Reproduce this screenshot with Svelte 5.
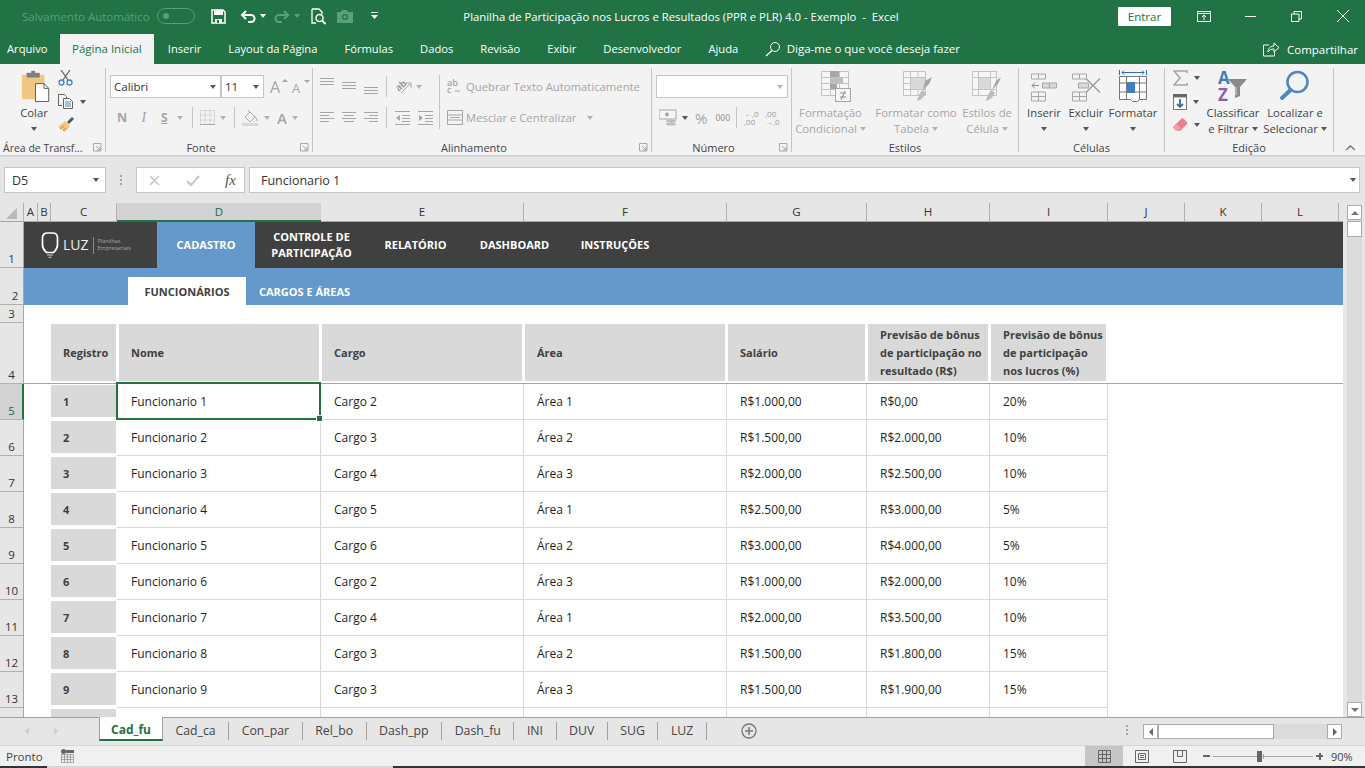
<script>
	const tabs = ['Arquivo', 'Página Inicial', 'Inserir', 'Layout da Página', 'Fórmulas', 'Dados', 'Revisão', 'Exibir', 'Desenvolvedor', 'Ajuda'];
	const letters = ['A', 'B', 'C', 'D', 'E', 'F', 'G', 'H', 'I', 'J', 'K', 'L'];
	const heads = ['Registro', 'Nome', 'Cargo', 'Área', 'Salário'];
	const sheets = ['Cad_fu', 'Cad_ca', 'Con_par', 'Rel_bo', 'Dash_pp', 'Dash_fu', 'INI', 'DUV', 'SUG', 'LUZ'];

	const rows = [
		[1, 'Cargo 2', 'Área 1', 'R$1.000,00', 'R$0,00', '20%'],
		[2, 'Cargo 3', 'Área 2', 'R$1.500,00', 'R$2.000,00', '10%'],
		[3, 'Cargo 4', 'Área 3', 'R$2.000,00', 'R$2.500,00', '10%'],
		[4, 'Cargo 5', 'Área 1', 'R$2.500,00', 'R$3.000,00', '5%'],
		[5, 'Cargo 6', 'Área 2', 'R$3.000,00', 'R$4.000,00', '5%'],
		[6, 'Cargo 2', 'Área 3', 'R$1.000,00', 'R$2.000,00', '10%'],
		[7, 'Cargo 4', 'Área 1', 'R$2.000,00', 'R$3.500,00', '10%'],
		[8, 'Cargo 3', 'Área 2', 'R$1.500,00', 'R$1.800,00', '15%'],
		[9, 'Cargo 3', 'Área 3', 'R$1.500,00', 'R$1.900,00', '15%']
	];

	const rowNums = [1, 2, 3, 4, 5, 6, 7, 8, 9, 10, 11, 12, 13, 14];

	// align icons: [x1, x2, y]
	const alignTop = [[0, 14, 3], [0, 14, 6], [0, 14, 9]];
	const alignMid = [[0, 14, 7], [0, 14, 10], [0, 14, 13]];
	const alignBot = [[0, 14, 12], [0, 14, 15], [0, 14, 18]];
	const alignL = [[0, 14, 6], [0, 9, 9], [0, 14, 12], [0, 9, 15]];
	const alignC = [[0, 14, 6], [2, 12, 9], [0, 14, 12], [2, 12, 15]];
	const alignR = [[0, 14, 6], [5, 14, 9], [0, 14, 12], [5, 14, 15]];
</script>

{#snippet lines(r)}
	<svg class="ic" width="14" height="23">
		{#each r as [a, b, y]}
			<rect x={a} {y} width={b - a} height="1" fill="#a6a6a6" />
		{/each}
	</svg>
{/snippet}

{#snippet launcher()}
	<svg class="launch" width="9" height="9">
		<path d="M0.5 8V0.5H8V8z M3 3l4 4 M4 7h3V4" fill="none" stroke="#a9a9a9" />
	</svg>
{/snippet}

<div class="app">
	<!-- title bar -->
	<header class="titlebar">
		<div class="qat">
			<span class="autosave">Salvamento Automático</span>
			<span class="toggle"><i></i></span>
			<svg class="save" width="15" height="15" viewBox="0 0 15 15">
				<path d="M1 1h11l2 2v11H1z" fill="none" stroke="#fff" stroke-width="1.5" />
				<rect x="3" y="1" width="9" height="5" fill="#fff" />
				<rect x="4" y="10" width="7" height="4" fill="#fff" />
				<rect x="6" y="11" width="2" height="3" fill="#217346" />
			</svg>
			<svg class="undo" width="16" height="15" viewBox="0 0 16 15">
				<path d="M6 2L2 6l4 4M2 6h9a3.500 3.500 0 0 1 0 7H8" fill="none" stroke="#fff" stroke-width="2" />
			</svg>
			<span class="caret white"></span>
			<svg class="redo" width="16" height="15" viewBox="0 0 16 15">
				<path d="M10 2l4 4-4 4M14 6H5a3.500 3.500 0 0 0 0 7h3" fill="none" stroke="#5aa07a" stroke-width="2" />
			</svg>
			<span class="caret faded"></span>
			<svg class="preview" width="16" height="17" viewBox="0 0 16 17">
				<path d="M1 1h7l3 3v2M5 15H1V1" fill="none" stroke="#fff" stroke-width="1.300" />
				<circle cx="8.500" cy="10" r="3.500" fill="none" stroke="#fff" stroke-width="1.500" />
				<path d="M11 12.500l3.500 3.500" stroke="#fff" stroke-width="2" />
			</svg>
			<svg class="camera" width="16" height="13" viewBox="0 0 16 13">
				<path d="M0 2h4l1-2h5l1 2h5v11H0z" fill="#5aa07a" />
				<circle cx="8" cy="7" r="3" fill="#217346" />
				<circle cx="8" cy="7" r="1.800" fill="#5aa07a" />
			</svg>
			<svg class="customize" width="7" height="8" viewBox="0 0 7 8">
				<rect x="0" y="0" width="7" height="1" fill="#fff" />
				<path d="M0 3h7L3.500 7z" fill="#fff" />
			</svg>
		</div>
		<div class="doc-title">Planilha de Participação nos Lucros e Resultados (PPR e PLR) 4.0 - Exemplo  -  Excel</div>
		<div class="win">
			<button class="signin">Entrar</button>
			<svg class="w1" width="14" height="11" viewBox="0 0 14 11">
				<path d="M.5.5h13v10H.5zM.5 2.500h13M7 9V4M5 6l2-2 2 2" fill="none" stroke="#fff" />
			</svg>
			<svg class="w2" width="11" height="1"><rect width="11" height="1" fill="#fff" /></svg>
			<svg class="w3" width="11" height="11" viewBox="0 0 11 11">
				<path d="M.5 3h7.500v7.500H.5zM3 3V.5h7.500V8H8" fill="none" stroke="#fff" />
			</svg>
			<svg class="w4" width="12" height="12" viewBox="0 0 12 12">
				<path d="M0 0l12 12M12 0L0 12" stroke="#fff" />
			</svg>
		</div>
	</header>

	<!-- menu tabs -->
	<nav class="menu">
		{#each tabs as t, i}
			<span class="menu-tab" class:active={i === 1}>{t}</span>
		{/each}
		<svg class="search" width="16" height="16" viewBox="0 0 16 16">
			<circle cx="10" cy="6" r="4.500" fill="none" stroke="#fff" />
			<path d="M7 9.500L1 15" stroke="#fff" stroke-width="1.200" />
		</svg>
		<span class="tell">Diga-me o que você deseja fazer</span>
		<span class="share">
			<svg width="17" height="15" viewBox="0 0 17 15">
				<path d="M6 3H.5v11h11v-4M5 10c0-4 3-6 6-6V1l5 4.500L11 10V7c-3 0-5 1-6 3z" fill="none" stroke="#fff" />
			</svg>
			Compartilhar
		</span>
	</nav>

	<!-- ribbon -->
	<section class="ribbon">
		<div class="group g-clip">
			<div class="body clip">
				<div class="big paste">
					<svg width="30" height="32" viewBox="0 -2 30 34">
						<rect x="0" y="3" width="24" height="26" rx="1" fill="#efc77f" />
						<rect x="5" y="1" width="14" height="5" fill="#7f7f7f" />
						<rect x="10" y="-1" width="4" height="3" fill="#7f7f7f" />
						<path d="M14.500 12.500h9l5 5v14h-14z" fill="#fff" stroke="#555" />
						<path d="M23.500 12.500v5h5" fill="none" stroke="#555" />
					</svg>
					<span class="lbl dark">Colar</span>
					<span class="caret"></span>
				</div>
				<div class="smalls">
					<svg width="15" height="16" viewBox="0 0 15 16">
						<path d="M3 0l7 10M12 0L5 10" stroke="#666" stroke-width="1.300" />
						<circle cx="3.500" cy="12.500" r="2.500" fill="none" stroke="#4a80bd" stroke-width="1.300" />
						<circle cx="11.500" cy="12.500" r="2.500" fill="none" stroke="#4a80bd" stroke-width="1.300" />
					</svg>
					<div class="hrow">
						<svg width="15" height="15" viewBox="0 0 15 15">
							<path d="M.5.5h6l2 2v2M4 11.500H.5V.5" fill="none" stroke="#666" />
							<path d="M5.500 4.500h6l3 3v7h-9z" fill="#fff" stroke="#666" />
							<path d="M7 8h6M7 10h6M7 12h6" stroke="#4a80bd" />
						</svg>
						<span class="caret"></span>
					</div>
					<svg width="16" height="15" viewBox="0 0 16 15">
						<path d="M0 10l7-6 5 5-5 6z" fill="#efc77f" />
						<path d="M2 12l4-3M5 14l3-3" stroke="#b98f3f" />
						<path d="M9 5l5-5 2 2-5 5z" fill="#555" />
					</svg>
				</div>
			</div>
			<div class="glabel">Área de Transf...</div>
			{@render launcher()}
		</div>

		<div class="group g-font">
			<div class="body rows">
				<div class="row">
					<span class="field f-name">Calibri<span class="caret"></span></span>
					<span class="field f-size">11<span class="caret"></span></span>
					<span class="ga up">A</span>
					<span class="ga down">A</span>
				</div>
				<div class="row r2">
					<span class="fmt b">N</span>
					<span class="fmt i">I</span>
					<span class="fmt s">S</span>
					<span class="caret off wide-c"></span>
					<span class="vsep"></span>
					<svg width="15" height="15" viewBox="0 0 15 15">
						<path d="M.5.5h14v14H.5zM.5 5h14M.5 10h14M5 .5v14M10 .5v14" fill="none" stroke="#bdbdbd" stroke-dasharray="1 1" />
						<path d="M0 14.500h15" stroke="#a6a6a6" />
					</svg>
					<span class="caret off"></span>
					<span class="vsep"></span>
					<svg width="17" height="17" viewBox="0 0 17 17">
						<path d="M3 8l5-5 5 5-5 5z" fill="#f6f6f6" stroke="#a6a6a6" />
						<path d="M6 1l2 2M13 8c2 1 2 3 2 4" stroke="#a6a6a6" fill="none" />
						<rect x="0" y="14" width="16" height="3" fill="#d9d9d9" />
					</svg>
					<span class="caret off"></span>
					<span class="fa">A</span>
					<span class="caret off"></span>
				</div>
			</div>
			<div class="glabel launched">Fonte</div>
			{@render launcher()}
		</div>

		<div class="group g-align">
			<div class="align-grid">
				<div class="body rows a-left">
					<div class="row">
						{@render lines(alignTop)}
						{@render lines(alignMid)}
						{@render lines(alignBot)}
						<span class="vsep tall"></span>
						<svg class="loose" width="17" height="15" viewBox="0 0 17 15">
							<text x="1" y="10" transform="rotate(-40 6 8)" class="orient">ab</text>
							<path d="M6 14L15 5M11 4h5v5" fill="none" stroke="#a6a6a6" />
						</svg>
						<span class="caret off"></span>
					</div>
					<div class="row">
						{@render lines(alignL)}
						{@render lines(alignC)}
						{@render lines(alignR)}
						<span class="vsep tall"></span>
						<svg width="15" height="15" viewBox="0 0 15 15">
							<path d="M0 1.500h15M7 5.500h8M7 8.500h8M7 11.500h8M0 14.500h15" stroke="#a6a6a6" />
							<path d="M5 5L1 8l4 3z" fill="#a6a6a6" />
						</svg>
						<svg width="15" height="15" viewBox="0 0 15 15">
							<path d="M0 1.500h15M7 5.500h8M7 8.500h8M7 11.500h8M0 14.500h15" stroke="#a6a6a6" />
							<path d="M1 5l4 3-4 3z" fill="#a6a6a6" />
						</svg>
					</div>
				</div>
				<div class="a-right">
					<div class="wide">
						<svg class="loose" width="16" height="15" viewBox="0 0 16 15">
							<text x="0" y="7" class="wrap-t">ab</text>
							<text x="0" y="14" class="wrap-t">c</text>
							<path d="M8 12h5" stroke="#a6a6a6" />
						</svg>
						<span class="muted">Quebrar Texto Automaticamente</span>
					</div>
					<div class="wide">
						<svg width="16" height="15" viewBox="0 0 16 15">
							<path d="M.5.5h15v14H.5zM.5 5h15M.5 10h15" fill="none" stroke="#a6a6a6" />
							<path d="M3 7.500h10" stroke="#a6a6a6" />
						</svg>
						<span class="muted">Mesclar e Centralizar</span>
						<span class="caret off merge"></span>
					</div>
				</div>
			</div>
			<div class="glabel launched">Alinhamento</div>
			{@render launcher()}
		</div>

		<div class="group g-num">
			<div class="body rows">
				<div class="row"><span class="field f-num"><span class="caret off"></span></span></div>
				<div class="row r-num">
					<svg width="18" height="17" viewBox="0 0 18 17">
						<rect x="0" y="1" width="17" height="9" fill="#f6f6f6" stroke="#a6a6a6" />
						<circle cx="8" cy="5.500" r="2" fill="#a6a6a6" />
						<ellipse cx="12" cy="12" rx="5" ry="1.500" fill="#bdbdbd" />
						<ellipse cx="12" cy="15" rx="5" ry="1.500" fill="#bdbdbd" />
					</svg>
					<span class="caret"></span>
					<span class="pct">%</span>
					<span class="thou">000</span>
					<span class="vsep"></span>
					<span class="dec">←,0<br />,00</span>
					<span class="dec">,00<br />→,0</span>
				</div>
			</div>
			<div class="glabel launched">Número</div>
			{@render launcher()}
		</div>

		<div class="group g-style">
			<div class="body bigs">
				<div class="big s1">
					<svg width="30" height="32" viewBox="0 -1 30 32">
						<path d="M.5.5h27v24H.5zM.5 6.500h27M.5 12.500h27M.5 18.500h27M9.500.5v24M18.500.5v24" fill="#f6f6f6" stroke="#c4c4c4" />
						<rect x="9" y="0" width="9" height="6" fill="#a6a6a6" />
						<rect x="9" y="7" width="13" height="5" fill="#bdbdbd" />
						<rect x="9" y="13" width="7" height="5" fill="#a6a6a6" />
						<rect x="14.500" y="17.500" width="15" height="13" fill="#f6f6f6" stroke="#a6a6a6" />
						<path d="M19 22h6M19 26h6M24 20l-4 9" stroke="#8c8c8c" />
					</svg>
					<span class="lbl">Formatação</span>
					<span class="lbl">Condicional<span class="caret off inl"></span></span>
				</div>
				<div class="big s2">
					<svg width="30" height="32" viewBox="0 -1 30 32">
						<path d="M.5.5h22v24H.5zM.5 6.500h22M.5 12.500h22M.5 18.500h22M7.500.5v24M15 .5v24" fill="#f6f6f6" stroke="#c4c4c4" />
						<rect x="8" y="7" width="14" height="11" fill="#d9d9d9" />
						<path d="M22 10l7-4-3 7-6 6z" fill="#a6a6a6" />
						<path d="M14 30c1-5 3-9 6-11l3 3c-2 4-5 7-9 8z" fill="#bdbdbd" />
					</svg>
					<span class="lbl">Formatar como</span>
					<span class="lbl">Tabela<span class="caret off inl"></span></span>
				</div>
				<div class="big s3">
					<svg width="30" height="32" viewBox="0 -1 30 32">
						<path d="M.5.5h24v24H.5zM.5 6.500h24M.5 18.500h24M6.500.5v24M18.500.5v24" fill="#f6f6f6" stroke="#c4c4c4" />
						<rect x="7" y="7" width="11" height="11" fill="#d9d9d9" />
						<path d="M24 10l5-4-3 7-6 6z" fill="#a6a6a6" />
						<path d="M14 30c1-5 3-9 6-11l3 3c-2 4-5 7-9 8z" fill="#bdbdbd" />
					</svg>
					<span class="lbl">Estilos de</span>
					<span class="lbl">Célula<span class="caret off inl"></span></span>
				</div>
			</div>
			<div class="glabel">Estilos</div>
		</div>

		<div class="group g-cells">
			<div class="body bigs">
				<div class="big c1">
					<svg width="28" height="31" viewBox="0 0 28 31">
						<path d="M1.500 3.500h14v5h-14zM8.500 3.500v5M1.500 21.500h14v9h-14zM8.500 21.500v9M1.500 26h14" fill="none" stroke="#a6a6a6" />
						<path d="M12.500 12.500h14v5h-14zM19.500 12.500v5" fill="#d9d9d9" stroke="#a6a6a6" />
						<path d="M9 15H2M5 12l-3 3 3 3" fill="none" stroke="#8a8a8a" />
					</svg>
					<span class="lbl dark">Inserir</span>
					<span class="caret"></span>
				</div>
				<div class="big c2">
					<svg width="30" height="31" viewBox="0 0 30 31">
						<path d="M1.500 3.500h14v5h-14zM8.500 3.500v5M1.500 21.500h14v9h-14zM8.500 21.500v9M1.500 26h14" fill="none" stroke="#a6a6a6" />
						<path d="M7.500 12.500h10v5h-10z" fill="#d9d9d9" stroke="#a6a6a6" />
						<path d="M15 8l14 14M29 8L15 22" stroke="#9a9a9a" stroke-width="1.300" />
					</svg>
					<span class="lbl dark">Excluir</span>
					<span class="caret"></span>
				</div>
				<div class="big c3">
					<svg width="28" height="32" viewBox="0 0 28 32">
						<path d="M.5 0v5M27.500 0v5M3 2.500h22M5 .5l-2 2 2 2M23 .5l2 2-2 2" fill="none" stroke="#2f6fb0" />
						<path d="M.5 6.500h27v23h-7l-2 2h-5l-2-2h-11zM.5 13h27M.5 22h27M7.500 6.500v23M20.500 6.500v23" fill="#fff" stroke="#777" />
						<rect x="8" y="12" width="8" height="11" fill="#3f7fbf" />
					</svg>
					<span class="lbl dark">Formatar</span>
					<span class="caret"></span>
				</div>
			</div>
			<div class="glabel">Células</div>
		</div>

		<div class="group g-edit">
			<div class="body bigs">
				<div class="smalls ed">
					<div class="hrow">
						<svg width="15" height="16" viewBox="0 0 15 16">
							<path d="M14 3V1H1l6 7-6 7h13v-2" fill="none" stroke="#a6a6a6" stroke-width="1.600" />
						</svg>
						<span class="caret"></span>
					</div>
					<div class="hrow">
						<svg width="14" height="16" viewBox="0 0 14 16">
							<rect x="0" y="0" width="14" height="3" fill="#666" />
							<rect x=".5" y="3" width="13" height="12.500" fill="#fff" stroke="#777" />
							<path d="M7 5v8M4 10l3 3 3-3" fill="none" stroke="#2f6fb0" stroke-width="1.800" />
						</svg>
						<span class="caret"></span>
					</div>
					<div class="hrow">
						<svg width="15" height="14" viewBox="0 0 15 14">
							<path d="M0 9l8-8a2 2 0 0 1 3 0l3 3a2 2 0 0 1 0 2l-7 7H3z" fill="#ec7f8c" />
							<path d="M3 13L0 9l3-3 5 4-3 3z" fill="#f2a0aa" />
						</svg>
						<span class="caret"></span>
					</div>
				</div>
				<div class="big e1">
					<svg class="loose" width="30" height="32" viewBox="0 0 30 32">
						<text x="0" y="14" class="az a">A</text>
						<text x="0" y="31" class="az z">Z</text>
						<path d="M10 9h19l-7 8v9l-5 2V17z" fill="#8a8a8a" />
						<path d="M18 17v8" stroke="#d9d9d9" />
					</svg>
					<span class="lbl dark">Classificar</span>
					<span class="lbl dark">e Filtrar<span class="caret inl"></span></span>
				</div>
				<div class="big e2">
					<svg width="30" height="32" viewBox="0 0 30 32">
						<circle cx="17.500" cy="12" r="10" fill="none" stroke="#4f88c1" stroke-width="2.600" />
						<path d="M10.500 20L2 28" stroke="#4f88c1" stroke-width="4" stroke-linecap="round" />
					</svg>
					<span class="lbl dark">Localizar e</span>
					<span class="lbl dark">Selecionar<span class="caret inl"></span></span>
				</div>
			</div>
			<div class="glabel">Edição</div>
		</div>

		<svg class="collapse" width="9" height="6" viewBox="0 0 9 6">
			<path d="M0 5l4.500-4L9 5" fill="none" stroke="#777" stroke-width="1.500" />
		</svg>
	</section>

	<!-- formula bar -->
	<div class="formula">
		<div class="namebox">D5<span class="caret"></span></div>
		<div class="dots"><i></i><i></i><i></i></div>
		<div class="fxbox">
			<svg width="11" height="11" viewBox="0 0 11 11">
				<path d="M1 1l9 9M10 1L1 10" stroke="#c6c6c6" stroke-width="1.500" />
			</svg>
			<svg width="14" height="11" viewBox="0 0 14 11">
				<path d="M1 6l4 4 8-9" fill="none" stroke="#c6c6c6" stroke-width="2" />
			</svg>
			<span class="fx">fx</span>
		</div>
		<div class="input">Funcionario 1<span class="caret"></span></div>
	</div>

	<!-- sheet -->
	<div class="workspace">
		<div class="sheet">
			<div class="colheads">
				<div class="corner"><svg width="11" height="11"><path d="M11 0v11H0z" fill="#b9b9b9" /></svg></div>
				{#each letters as l}
					<div class="ch" class:sel={l === 'D'}>{l}</div>
				{/each}
				<div class="ch-end"></div>
			</div>
			<div class="sheet-main">
				<div class="rowheads">
					{#each rowNums as n}
						<div class="rh r{n}" class:sel={n === 5}>{n}</div>
					{/each}
				</div>
				<div class="cells">
					<div class="topnav">
						<div class="logo">
							<svg width="18" height="26" viewBox="0 0 18 26">
								<path d="M5.500 20.500C3.500 18.500 1.500 17 1.500 13V6c0-3 2-5 5-5h5c3 0 5 2 5 5v7c0 4-2 5.500-4 7.500z" fill="none" stroke="#fff" stroke-width="1.700" />
								<path d="M6 23h6M7.500 25.300h3" stroke="#d0d0d0" />
							</svg>
							<span class="luz">LUZ</span>
							<span class="logo-sep"></span>
							<span class="logo-sub">Planilhas<br />Empresariais</span>
						</div>
						<div class="nav active n1">CADASTRO</div>
						<div class="nav n2">CONTROLE DE<br />PARTICIPAÇÃO</div>
						<div class="nav n3">RELATÓRIO</div>
						<div class="nav n4">DASHBOARD</div>
						<div class="nav n5">INSTRUÇÕES</div>
					</div>
					<div class="subnav">
						<div class="sub active">FUNCIONÁRIOS</div>
						<div class="sub other">CARGOS E ÁREAS</div>
					</div>
					<div class="spacer"></div>
					<div class="thead tbl">
						{#each heads as h}
							<div class="th">{h}</div>
						{/each}
						<div class="th">Previsão de bônus de participação no resultado (R$)</div>
						<div class="th last">Previsão de bônus de participação nos lucros (%)</div>
					</div>
					{#each rows as r, i}
						<div class="tr tbl">
							<div class="id"><span>{r[0]}</span></div>
							<div class="td" class:current={i === 0}>Funcionario {r[0]}</div>
							{#each r.slice(1) as v}
								<div class="td">{v}</div>
							{/each}
						</div>
					{/each}
					<div class="tr tbl">
						<div class="id"></div>
						{#each [0, 1, 2, 3, 4, 5] as k}
							<div class="td" data-k={k}></div>
						{/each}
					</div>
				</div>
			</div>
		</div>
		<div class="vscroll">
			<div class="track">
				<div class="sb-btn"><span class="tri-up"></span></div>
				<div class="sb-thumb"></div>
				<div class="sb-fill"></div>
				<div class="sb-btn"><span class="tri-down"></span></div>
			</div>
		</div>
	</div>

	<!-- sheet tabs -->
	<div class="tabbar">
		<div class="nav-arrows">
			<span class="tri-left"></span>
			<span class="tri-right"></span>
		</div>
		<div class="sheet-tabs">
			{#each sheets as s, i}
				<span class="st" class:active={i === 0}>{s}</span>
			{/each}
		</div>
		<svg class="add" width="16" height="16" viewBox="0 0 16 16">
			<circle cx="8" cy="8" r="7" fill="none" stroke="#777" stroke-width="1.300" />
			<path d="M8 4v8M4 8h8" stroke="#777" stroke-width="1.500" />
		</svg>
		<div class="dots hs"><i></i><i></i><i></i></div>
		<div class="hscroll">
			<div class="sb-btn h"><span class="tri-left dark"></span></div>
			<div class="h-thumb"></div>
			<div class="h-fill"></div>
			<div class="sb-btn h"><span class="tri-right dark"></span></div>
		</div>
	</div>

	<!-- status bar -->
	<footer class="status">
		<span class="ready">Pronto</span>
		<svg class="macro" width="13" height="14" viewBox="0 0 13 14">
			<circle cx="2.500" cy="2.500" r="2.500" fill="#666" />
			<rect x="5" y="1" width="8" height="3" fill="#666" />
			<path d="M.5 5.500h12v8H.5zM.5 8h12M.5 10.500h12M3.500 5.500v8M6.500 5.500v8M9.500 5.500v8" fill="none" stroke="#666" stroke-dasharray="1 1" />
		</svg>
		<div class="views">
			<span class="view on">
				<svg width="13" height="13" viewBox="0 0 13 13">
					<path d="M.5.5h12v12H.5zM.5 4.500h12M.5 8.500h12M4.500.5v12M8.500.5v12" fill="none" stroke="#666" />
				</svg>
			</span>
			<span class="view">
				<svg width="14" height="13" viewBox="0 0 14 13">
					<path d="M.5.5h13v12H.5z" fill="none" stroke="#666" />
					<path d="M3.500 3.500h7v6h-7zM5 5.500h4M5 7.500h4" fill="none" stroke="#666" />
				</svg>
			</span>
			<span class="view">
				<svg width="14" height="13" viewBox="0 0 14 13">
					<path d="M.5.5h13v12H.5zM4.500.5v6h5v-6" fill="none" stroke="#666" />
				</svg>
			</span>
		</div>
		<span class="minus"></span>
		<div class="slider"><i class="tick"></i><i class="knob"></i></div>
		<span class="plus"></span>
		<span class="zoom">90%</span>
	</footer>
	<div class="taskbar"><i></i><b></b><i class="rest"></i></div>
</div>

<style>
	:global(body) {
		margin: 0;
		overflow: hidden;
	}

	.app {
		width: 1365px;
		height: 768px;
		display: flex;
		flex-direction: column;
		overflow: hidden;
		font-family: 'Open Sans', 'Liberation Sans', sans-serif;
		background: #e6e6e6;
		color: #444;
	}

	svg {
		display: block;
		flex-shrink: 0;
	}
	svg.loose {
		overflow: visible;
	}

	.caret {
		display: inline-block;
		width: 0;
		height: 0;
		border-left: 3.5px solid transparent;
		border-right: 3.5px solid transparent;
		border-top: 4px solid #555;
		flex-shrink: 0;
	}
	.caret.off {
		border-top-color: #b3b3b3;
	}
	.caret.white {
		border-top-color: #fff;
		margin: 0 8px 0 4px;
	}
	.caret.faded {
		border-top-color: #5aa07a;
	}
	.caret.inl {
		margin-left: 3px;
		vertical-align: 2px;
	}

	/* ── title bar ── */
	.titlebar {
		height: 32px;
		background: #217346;
		display: flex;
		align-items: center;
		color: #fff;
		flex-shrink: 0;
	}
	.qat {
		width: 455px;
		display: flex;
		align-items: center;
		padding-left: 22px;
		box-sizing: border-box;
	}
	.autosave {
		color: #56a079;
		font-size: 11.5px;
		width: 135px;
		white-space: nowrap;
	}
	.toggle {
		width: 38px;
		height: 16px;
		box-sizing: border-box;
		border: 1px solid #56a079;
		border-radius: 8px;
		display: flex;
		align-items: center;
		padding-left: 5px;
	}
	.toggle i {
		width: 6px;
		height: 6px;
		border-radius: 50%;
		background: #56a079;
	}
	.save {
		margin-left: 16px;
	}
	.undo {
		margin-left: 14px;
	}
	.redo {
		margin-right: 4px;
	}
	.preview {
		margin-left: 11px;
	}
	.camera {
		margin-left: 10px;
	}
	.customize {
		margin-left: 18px;
	}
	.doc-title {
		width: 452px;
		text-align: center;
		font-size: 11.35px;
		white-space: pre;
	}
	.win {
		flex: 1;
		display: flex;
		align-items: center;
	}
	.signin {
		margin-left: 211px;
		width: 53px;
		height: 19px;
		border: none;
		padding: 0;
		background: #fff;
		color: #217346;
		font: 11.5px 'Open Sans', sans-serif;
		border-radius: 1px;
	}
	.w1 {
		margin-left: 26px;
	}
	.w2 {
		margin-left: 34px;
	}
	.w3 {
		margin-left: 35px;
	}
	.w4 {
		margin-left: 35px;
	}

	/* ── menu tabs ── */
	.menu {
		height: 32px;
		background: #217346;
		display: flex;
		align-items: flex-end;
		color: #fff;
		font-size: 11.2px;
		flex-shrink: 0;
	}
	.menu-tab {
		height: 30px;
		line-height: 29px;
		padding: 0 13.5px;
		white-space: nowrap;
	}
	.menu-tab:first-child {
		padding: 0 12px 0 7px;
	}
	.menu-tab.active {
		background: #f3f3f3;
		color: #217346;
		padding: 0 12.5px;
		font-size: 11.5px;
	}
	.search {
		margin: 0 6px 7px 13px;
	}
	.tell {
		height: 30px;
		line-height: 29px;
		white-space: nowrap;
		font-size: 11.5px;
	}
	.share {
		margin-left: auto;
		margin-right: 7px;
		height: 30px;
		display: flex;
		align-items: center;
		gap: 7px;
		font-size: 11.5px;
	}

	/* ── ribbon ── */
	.ribbon {
		height: 91px;
		margin-bottom: 2px;
		background: #f3f3f3;
		display: flex;
		box-sizing: border-box;
		padding: 4px 0 3px;
		position: relative;
		flex-shrink: 0;
		box-shadow: 0 1px 0 #d0d0d0, 0 2px 0 #dcdcdc;
	}
	.group {
		position: relative;
		box-sizing: border-box;
		border-right: 1px solid #c6c6c6;
		display: flex;
		flex-direction: column;
		justify-content: space-between;
	}
	.g-clip {
		width: 106px;
	}
	.g-font {
		width: 207px;
	}
	.g-align {
		width: 339px;
	}
	.g-num {
		width: 140px;
	}
	.g-style {
		width: 227px;
	}
	.g-cells {
		width: 146px;
	}
	.g-edit {
		width: 169px;
	}
	.glabel {
		height: 16px;
		line-height: 16px;
		margin-bottom: -4px;
		font-size: 11px;
		text-align: center;
		color: #444;
		white-space: nowrap;
	}
	.glabel.launched {
		padding-right: 16px;
	}
	.g-clip .glabel {
		text-align: left;
		padding-left: 3px;
		font-size: 10.5px;
	}
	.launch {
		position: absolute;
		right: 3px;
		bottom: 0;
	}
	.collapse {
		position: absolute;
		right: 10px;
		bottom: 4px;
	}
	.lbl {
		font-size: 11.3px;
		line-height: 16px;
		color: #a6a6a6;
		white-space: nowrap;
	}
	.lbl.dark {
		color: #444;
	}
	.big {
		display: flex;
		flex-direction: column;
		align-items: center;
		flex-shrink: 0;
	}
	.big svg {
		height: 32px;
		margin-bottom: 3px;
	}
	.big > .caret {
		margin-top: 6px;
	}
	.body.clip,
	.body.bigs {
		display: flex;
		padding-top: 2px;
	}
	.paste {
		width: 52px;
		margin-left: 8px;
	}
	.paste svg {
		margin-left: 4px;
	}
	.smalls {
		display: flex;
		flex-direction: column;
		gap: 8px;
		margin-left: -2px;
		padding-top: 0;
	}
	.hrow {
		display: flex;
		align-items: center;
		gap: 7px;
	}
	.rows {
		padding: 7px 0 0 4px;
		display: flex;
		flex-direction: column;
		gap: 8px;
	}
	.row {
		height: 23px;
		display: flex;
		align-items: center;
	}
	.field {
		box-sizing: border-box;
		height: 23px;
		background: #fff;
		border: 1px solid #c6c6c6;
		font-size: 11.5px;
		line-height: 20px;
		color: #333;
		display: flex;
		align-items: center;
		justify-content: space-between;
		padding: 0 4px 0 3px;
	}
	.f-name {
		width: 111px;
	}
	.f-size {
		width: 43px;
	}
	.ga {
		font-size: 16px;
		color: #a6a6a6;
		position: relative;
		margin-left: 6px;
		width: 16px;
		text-align: left;
	}
	.ga.down {
		font-size: 13px;
		margin-left: 6px;
		padding-top: 2px;
	}
	.ga::after {
		content: '';
		position: absolute;
		right: -2px;
		top: 3px;
		border-left: 3px solid transparent;
		border-right: 3px solid transparent;
	}
	.ga.up::after {
		border-bottom: 3px solid #a6a6a6;
	}
	.ga.down::after {
		border-top: 3px solid #a6a6a6;
	}
	.r2 {
		padding-left: 7px;
		gap: 0;
	}
	.r2 .caret {
		margin: 0 8px 0 5px;
	}
	.r2 .caret.wide-c {
		margin: 0 9px 0 7px;
	}
	.fmt {
		width: 21.5px;
		font-size: 12.5px;
		color: #a6a6a6;
		font-weight: 700;
		white-space: nowrap;
	}
	.fmt.i {
		width: 22.5px;
		box-sizing: border-box;
		padding-left: 3px;
		font-style: italic;
		font-family: 'Liberation Serif', serif;
		font-weight: 400;
		font-size: 14px;
	}
	.fmt.s {
		text-decoration: underline;
		width: 9px;
		font-size: 12px;
	}
	.fa {
		font-size: 15px;
		color: #a6a6a6;
		font-weight: 600;
		margin-left: -1px;
	}
	.vsep {
		width: 1px;
		height: 21px;
		background: #c6c6c6;
		margin-right: 7px;
		flex-shrink: 0;
	}
	.vsep.tall {
		margin: 0 7px 0 8px;
	}
	.r2 .vsep {
		margin-left: 0;
	}

	.align-grid {
		display: flex;
	}
	.a-left {
		padding-left: 7px;
		width: 126px;
		box-sizing: border-box;
	}
	.a-left .row {
		gap: 8px;
	}
	.a-left .vsep.tall {
		margin: 0;
	}
	.a-left .caret {
		margin-left: -4px;
	}
	.a-right {
		border-left: 1px solid #c6c6c6;
		margin-top: 7px;
		height: 54px;
		padding-left: 7px;
		display: flex;
		flex-direction: column;
		gap: 8px;
	}
	.wide {
		height: 23px;
		display: flex;
		align-items: center;
		gap: 3px;
	}
	.muted {
		font-size: 11.3px;
		color: #a6a6a6;
		white-space: nowrap;
	}
	.merge {
		margin-left: 8px;
	}
	.orient {
		font: 600 9.5px 'Open Sans', sans-serif;
		fill: #8c8c8c;
	}
	.wrap-t {
		font: 600 9px 'Open Sans', sans-serif;
		fill: #a6a6a6;
	}
	.f-num {
		width: 132px;
		justify-content: flex-end;
	}
	.r-num {
		padding-left: 3px;
	}
	.r-num .caret {
		margin: 0 9px 0 5px;
	}
	.pct {
		font-size: 15px;
		color: #a6a6a6;
		margin-right: 6px;
		margin-left: -2px;
	}
	.thou {
		font-size: 8.5px;
		color: #8c8c8c;
		margin-right: 6px;
		margin-left: 2px;
	}
	.r-num .vsep {
		margin-right: 7px;
	}
	.dec {
		font-size: 8px;
		line-height: 8px;
		color: #999;
		width: 21px;
		white-space: nowrap;
	}

	.s1 {
		width: 75px;
		margin-left: 1px;
	}
	.s1 svg {
		margin-left: 10px;
	}
	.s2 {
		width: 96px;
	}
	.s2 svg {
		margin-left: 4px;
	}
	.s3 {
		width: 46px;
	}
	.g-cells .bigs {
		padding-left: 1px;
	}
	.c1 {
		width: 48px;
	}
	.c2 {
		width: 36px;
	}
	.c3 {
		width: 58px;
	}
	.ed {
		width: 36px;
		padding-left: 8px;
		box-sizing: border-box;
		margin-left: 0;
		flex-shrink: 0;
	}
	.ed .hrow {
		gap: 6px;
	}
	.e1 {
		width: 64px;
	}
	.e2 {
		width: 60px;
	}
	.az {
		font: 700 17px 'Open Sans', sans-serif;
	}
	.az.a {
		fill: #3f7fbf;
	}
	.az.z {
		fill: #8e5bb5;
	}

	/* ── formula bar ── */
	.formula {
		height: 46px;
		display: flex;
		padding: 10px 5px 10px 4px;
		box-sizing: border-box;
		flex-shrink: 0;
	}
	.namebox,
	.fxbox,
	.input {
		box-sizing: border-box;
		height: 26px;
		background: #fff;
		border: 1px solid #c6c6c6;
		display: flex;
		align-items: center;
		font-size: 12.5px;
		color: #333;
	}
	.namebox {
		width: 102px;
		justify-content: space-between;
		padding: 0 6px 0 7px;
	}
	.dots {
		width: 30px;
		display: flex;
		flex-direction: column;
		align-items: center;
		justify-content: center;
		gap: 2px;
	}
	.dots i {
		width: 2px;
		height: 2px;
		background: #a6a6a6;
	}
	.fxbox {
		width: 109px;
		padding-left: 12px;
		gap: 26px;
	}
	.fx {
		font: italic 400 15px 'Liberation Serif', serif;
		color: #555;
		margin-left: -1px;
	}
	.input {
		margin-left: 4px;
		flex: 1;
		padding: 0 3px 0 11px;
		justify-content: space-between;
	}

	/* ── sheet ── */
	.workspace {
		height: 514px;
		display: flex;
		flex-shrink: 0;
	}
	.sheet {
		width: 1343px;
		display: flex;
		flex-direction: column;
	}
	.colheads {
		height: 19px;
		display: grid;
		grid-template-columns: 24px 14px 13px 66px 204px 203px 203px 140px 123px 118px 77px 77px 77px 4px;
		border-bottom: 1px solid #a6a6a6;
		box-sizing: border-box;
		flex-shrink: 0;
	}
	.corner {
		display: flex;
		align-items: flex-end;
		justify-content: center;
		padding-bottom: 3px;
		border-right: 1px solid #b0b0b0;
		box-sizing: border-box;
	}
	.ch {
		border-right: 1px solid #b0b0b0;
		font-size: 11.5px;
		text-align: center;
		line-height: 18px;
		color: #333;
	}
	.ch.sel {
		background: #d2d2d2;
		border-bottom: 2px solid #217346;
		border-right: 0;
		color: #1d6b40;
		height: 19px;
		box-sizing: border-box;
	}
	.sheet-main {
		display: flex;
		height: 495px;
		overflow: hidden;
	}
	.rowheads {
		width: 24px;
		flex-shrink: 0;
		border-right: 1px solid #a6a6a6;
		box-sizing: border-box;
	}
	.rh {
		height: 36px;
		box-sizing: border-box;
		border-bottom: 1px solid #b0b0b0;
		display: flex;
		align-items: flex-end;
		justify-content: center;
		font-size: 11.5px;
		line-height: 15px;
		padding-bottom: 1px;
		color: #333;
	}
	.rh.r1 {
		height: 46px;
	}
	.rh.r2 {
		height: 37px;
	}
	.rh.r3 {
		height: 18px;
	}
	.rh.r4 {
		height: 61px;
	}
	.rh.sel {
		background: #d2d2d2;
		color: #1d6b40;
		box-shadow: inset -1px 0 0 #217346;
		margin-right: -1px;
		border-right: 1px solid #217346;
	}
	.cells {
		flex: 1;
		min-width: 0;
		background: #fff;
		overflow: hidden;
		font-size: 12px;
		color: #1f1f1f;
	}
	.topnav {
		height: 46px;
		background: #404040;
		display: flex;
		color: #fff;
		font-weight: 700;
		font-size: 11px;
		line-height: 16px;
		text-align: center;
	}
	.logo {
		width: 133px;
		display: flex;
		align-items: center;
		padding-left: 17px;
		box-sizing: border-box;
		font-weight: 400;
		text-align: left;
	}
	.luz {
		font-size: 14px;
		margin-left: 4px;
		color: #eee;
	}
	.logo-sep {
		width: 1px;
		height: 17px;
		background: #888;
		margin: 0 4px 0 4px;
	}
	.logo-sub {
		font-size: 5.5px;
		line-height: 7px;
		color: #a6a6a6;
		white-space: nowrap;
	}
	.nav {
		display: flex;
		align-items: center;
		justify-content: center;
	}
	.nav.active {
		background: #6598cb;
	}
	.n1 {
		width: 98px;
	}
	.n2 {
		width: 113px;
	}
	.n3 {
		width: 95px;
	}
	.n4 {
		width: 103px;
	}
	.n5 {
		width: 98px;
	}
	.subnav {
		height: 37px;
		background: #6598cb;
		display: flex;
		align-items: flex-end;
		padding-left: 104px;
		font-size: 11px;
		font-weight: 700;
	}
	.sub {
		height: 28px;
		line-height: 29px;
		text-align: center;
	}
	.sub.active {
		width: 118px;
		background: #fff;
		color: #404040;
	}
	.sub.other {
		margin-left: 13px;
		color: #fff;
	}
	.spacer {
		height: 18px;
	}
	.tbl {
		display: grid;
		grid-template-columns: 27px 66px 204px 203px 203px 140px 123px 118px;
	}
	.thead {
		height: 61px;
		box-sizing: border-box;
		padding: 1px 0 2px 0;
		border-bottom: 1px solid #a6a6a6;
		font-weight: 700;
		font-size: 11px;
		color: #404040;
		line-height: 18px;
	}
	.th {
		background: #d9d9d9;
		display: flex;
		align-items: center;
		padding-left: 12px;
		margin-left: 1px;
		margin-right: 2px;
	}
	.th:nth-child(1) {
		grid-column: 2;
		margin: 0 1px 0 0;
	}
	.th:nth-child(2) {
		margin-left: 2px;
	}
	.tr {
		height: 36px;
	}
	.id {
		grid-column: 2;
		padding: 1px 1px 3px 0;
		font-weight: 700;
		font-size: 11px;
		color: #404040;
	}
	.id span {
		display: flex;
		align-items: center;
		height: 100%;
		background: #d9d9d9;
		padding-left: 12px;
	}
	.tr:last-child .id {
		padding-bottom: 0;
	}
	.tr:last-child .id::before {
		content: '';
		display: block;
		height: 32px;
		background: #d9d9d9;
	}
	.td {
		position: relative;
		display: flex;
		align-items: center;
		padding-left: 13px;
		border-right: 1px solid #d9d9d9;
		border-bottom: 1px solid #d9d9d9;
	}
	.id + .td {
		padding-left: 14px;
	}
	.td.current::after {
		content: '';
		position: absolute;
		left: -1px;
		right: -1px;
		top: -2px;
		bottom: -1px;
		border: 2px solid #217346;
	}
	.td.current::before {
		content: '';
		position: absolute;
		z-index: 2;
		right: -2px;
		bottom: -2px;
		width: 5px;
		height: 5px;
		background: #217346;
		outline: 1px solid #fff;
	}

	/* ── scrollbars ── */
	.vscroll {
		flex: 1;
		padding: 2px 3px 0 4px;
	}
	.track {
		height: 100%;
		background: #dbdbdb;
		display: flex;
		flex-direction: column;
	}
	.sb-btn {
		height: 15px;
		box-sizing: border-box;
		background: #fff;
		border: 1px solid #ababab;
		display: flex;
		align-items: center;
		justify-content: center;
		flex-shrink: 0;
	}
	.sb-thumb {
		height: 16px;
		margin-top: 1px;
		background: #fff;
		border: 1px solid #ababab;
		box-sizing: border-box;
	}
	.sb-fill {
		flex: 1;
	}
	.tri-up,
	.tri-down {
		width: 0;
		height: 0;
		border-left: 4px solid transparent;
		border-right: 4px solid transparent;
	}
	.tri-up {
		border-bottom: 4px solid #777;
	}
	.tri-down {
		border-top: 4px solid #777;
	}
	.tri-left,
	.tri-right {
		width: 0;
		height: 0;
		border-top: 4px solid transparent;
		border-bottom: 4px solid transparent;
	}
	.tri-left {
		border-right: 4px solid #cfcfcf;
	}
	.tri-right {
		border-left: 4px solid #cfcfcf;
	}
	.tri-left.dark {
		border-right-color: #666;
	}
	.tri-right.dark {
		border-left-color: #666;
	}

	/* ── sheet tabs ── */
	.tabbar {
		height: 28px;
		box-sizing: border-box;
		border-top: 1px solid #a0a0a0;
		display: flex;
		align-items: flex-start;
		flex-shrink: 0;
		position: relative;
	}
	.nav-arrows {
		width: 99px;
		box-sizing: border-box;
		padding: 9px 0 0 25px;
		display: flex;
		gap: 25px;
	}
	.sheet-tabs {
		display: flex;
		font-size: 12.3px;
		color: #444;
	}
	.st {
		height: 18px;
		margin-top: 4px;
		line-height: 18px;
		padding: 0 12.5px;
		border-right: 1px solid #a0a0a0;
		white-space: nowrap;
	}
	.st.active {
		height: 24px;
		margin-top: -1px;
		line-height: 25px;
		box-sizing: border-box;
		padding: 0 11px;
		font-size: 12px;
		background: #fff;
		color: #217346;
		font-weight: 700;
		border-left: 1px solid #a0a0a0;
		border-right: 1px solid #a0a0a0;
		border-bottom: 2px solid #217346;
	}
	.add {
		margin: 5px 0 0 34px;
	}
	.dots.hs {
		width: auto;
		position: absolute;
		left: 1126px;
		top: 7px;
	}
	.hscroll {
		position: absolute;
		left: 1143px;
		top: 6px;
		width: 199px;
		height: 15px;
		display: flex;
		background: #dbdbdb;
	}
	.sb-btn.h {
		width: 15px;
		height: 15px;
	}
	.h-thumb {
		width: 116px;
		background: #fff;
		border: 1px solid #ababab;
		box-sizing: border-box;
	}
	.h-fill {
		flex: 1;
	}

	/* ── status bar ── */
	.status {
		height: 21px;
		background: #f0f0f0;
		border-top: 1px solid #d4d4d4;
		box-sizing: border-box;
		display: flex;
		align-items: center;
		flex-shrink: 0;
		font-size: 11.5px;
		color: #444;
	}
	.ready {
		margin-left: 6px;
		width: 55px;
	}
	.views {
		margin-left: 1011px;
		display: flex;
		height: 100%;
	}
	.view {
		width: 38px;
		display: flex;
		align-items: center;
		justify-content: center;
	}
	.view.on {
		background: #c6c6c6;
	}
	.minus {
		width: 7px;
		height: 2px;
		background: #666;
		margin-left: 4px;
	}
	.slider {
		position: relative;
		width: 100px;
		height: 1px;
		background: #a6a6a6;
		margin-left: 3px;
	}
	.knob {
		position: absolute;
		left: 44px;
		top: -5px;
		width: 5px;
		height: 11px;
		background: #666;
	}
	.tick {
		position: absolute;
		left: 50px;
		top: -2px;
		width: 1px;
		height: 5px;
		background: #a6a6a6;
	}
	.plus {
		position: relative;
		width: 7px;
		height: 2px;
		background: #666;
		margin-left: 3px;
	}
	.plus::after {
		content: '';
		position: absolute;
		left: 2.5px;
		top: -2.5px;
		width: 2px;
		height: 7px;
		background: #666;
	}
	.zoom {
		margin-left: 8px;
		font-size: 11px;
	}
	.taskbar {
		height: 2px;
		display: flex;
		flex-shrink: 0;
	}
	.taskbar i {
		width: 47px;
		background: #333;
	}
	.taskbar b {
		width: 346px;
		background: #d8d8d8;
	}
	.taskbar i.rest {
		flex: 1;
	}
</style>
